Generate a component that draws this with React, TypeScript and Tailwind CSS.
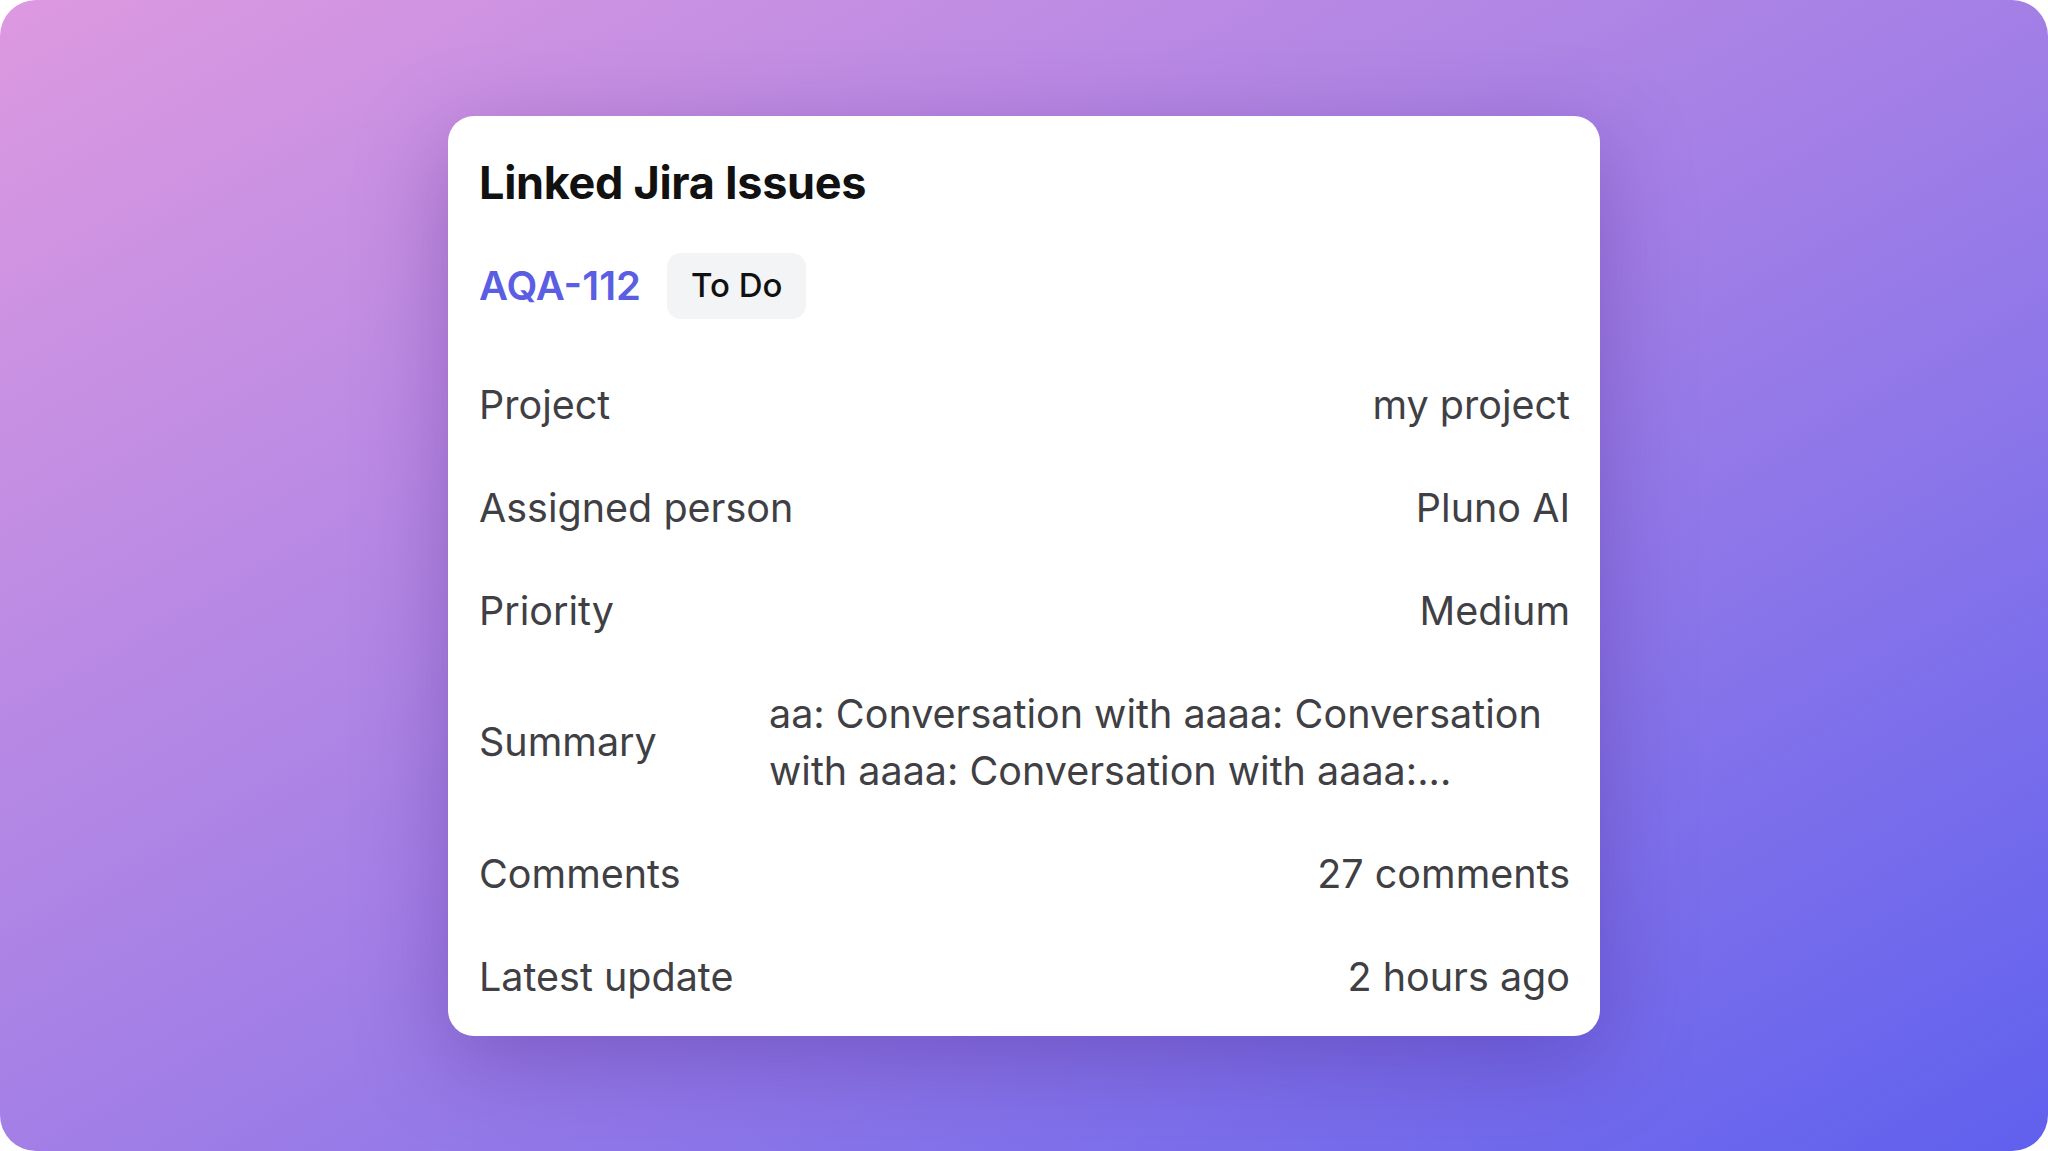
import React from "react";

const details = [
  { label: "Project", value: "my project" },
  { label: "Assigned person", value: "Pluno AI" },
  { label: "Priority", value: "Medium" },
  {
    label: "Summary",
    value: "aa: Conversation with aaaa: Conversation with aaaa: Conversation with aaaa:...",
    long: true,
  },
  { label: "Comments", value: "27 comments" },
  { label: "Latest update", value: "2 hours ago" },
];

export default function App() {
  return (
    <div className="w-full h-screen bg-white">
      <div
        className="w-full h-full rounded-[36px] bg-gradient-to-br from-[#dd99e0] via-[#a37fe6] to-[#5f60ee] flex items-center justify-center"
        style={{ fontFamily: "Inter, 'Noto Sans', sans-serif" }}
      >
        <div className="w-[1152px] bg-white rounded-[26px] shadow-[0_24px_90px_rgba(70,30,130,0.35)] pl-[31px] pr-[30px] pt-[40px] pb-[7px]">
          <h2 className="text-[45px] leading-[54px] font-bold text-[#111111] tracking-[-0.3px]">
            Linked Jira Issues
          </h2>

          {/* issue key + status */}
          <div className="mt-[43px] flex items-center gap-[26px]">
            <span className="text-[40px] font-semibold text-[#5b5ee2]">AQA-112</span>
            <span className="h-[66px] px-[24px] flex items-center rounded-[14px] bg-[#f3f4f6] text-[33px] font-medium text-[#111111]">
              To Do
            </span>
          </div>

          <div className="mt-[35px]">
            {details.map((row) =>
              row.long ? (
                <div
                  key={row.label}
                  className="flex items-center py-[23px] text-[39.5px] leading-[57px] text-[#404044]"
                >
                  <div className="w-[290px] shrink-0">{row.label}</div>
                  <div className="flex-1 line-clamp-2">{row.value}</div>
                </div>
              ) : (
                <div
                  key={row.label}
                  className="flex items-center justify-between py-[23px] text-[39.5px] leading-[57px] text-[#404044] whitespace-nowrap"
                >
                  <div>{row.label}</div>
                  <div>{row.value}</div>
                </div>
              )
            )}
          </div>
        </div>
      </div>
    </div>
  );
}
